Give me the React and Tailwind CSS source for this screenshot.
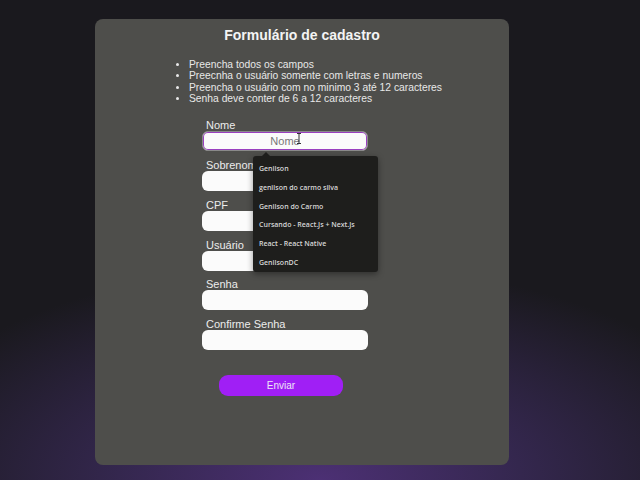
import React from 'react'

const rules = [
  'Preencha todos os campos',
  'Preecnha o usuário somente com letras e numeros',
  'Preencha o usuário com no minimo 3 até 12 caracteres',
  'Senha deve conter de 6 a 12 caracteres',
]

const fields = ['Sobrenome', 'CPF', 'Usuário', 'Senha', 'Confirme Senha']

const suggestions = [
  'Genilson',
  'genilson do carmo silva',
  'Genilson do Carmo',
  'Cursando - React.Js + Next.Js',
  'React - React Native',
  'GenilsonDC',
]

function Field({ label }) {
  return (
    <div className="flex flex-col">
      <label className="ml-[4px] text-[11px] leading-[12px] text-[#ececec]">{label}</label>
      <input
        type="text"
        className="mt-0 h-[20px] w-[166px] rounded-[6px] bg-[#fbfbfb] outline-none"
      />
    </div>
  )
}

export default function App() {
  return (
    <div
      className="relative h-[480px] w-[640px] overflow-hidden bg-[#1a191e] bg-[radial-gradient(ellipse_70%_45%_at_50%_100%,#4c3074_0%,#34274e_45%,#1a191e_100%)] pt-[19px]"
      style={{ fontFamily: '"Liberation Sans", Arial, sans-serif' }}
    >
      <div className="ml-[95px] h-[446px] w-[414px] rounded-[8px] bg-[#4e4e4b] pt-[8px]">
        <h1 className="text-center text-[14px] font-bold leading-[17px] text-[#f4f4f4]">
          Formulário de cadastro
        </h1>

        <ul className="ml-[94px] mt-[15px] list-disc text-[10.3px] leading-[11.3px] text-[#e8e8e8]">
          {rules.map((r) => (
            <li key={r}>{r}</li>
          ))}
        </ul>

        <form className="ml-[107px] mt-[15px] flex flex-col gap-[7.8px]">
          <div className="relative flex flex-col">
            <label className="ml-[4px] text-[11px] leading-[12px] text-[#ececec]">Nome</label>
            <div className="relative h-[20px] w-[166px] rounded-[6px] border border-[#8a8a8a] bg-[#fbfbfb] ring-1 ring-inset ring-[#9a3fc0]">
              <span className="absolute inset-x-0 top-[3px] text-center text-[11px] leading-[12px] text-[#777]">
                Nome
              </span>
              <svg
                className="absolute left-[93px] top-[1px]"
                width="6"
                height="11"
                viewBox="0 0 6 11"
                fill="none"
                stroke="#333"
                strokeWidth="1"
              >
                <path d="M1 0.5h4M3 0.5v10M1 10.5h4" />
              </svg>
            </div>

            <div className="absolute left-[51px] top-[37px] z-10 h-[116px] w-[125px] rounded-[3px] bg-[#1e1e1c] shadow-[0_2px_6px_rgba(0,0,0,0.4)]">
              <div className="absolute -top-[4px] left-[9px] h-0 w-0 border-x-[4px] border-b-[4px] border-x-transparent border-b-[#1e1e1c]" />
              <ul
                className="flex flex-col pt-[8px] pl-[6px] text-[7px] font-semibold leading-[10px] text-[#d6d6d6]"
                style={{ fontFamily: '"Open Sans", "Noto Sans", sans-serif' }}
              >
                {suggestions.map((s) => (
                  <li key={s} className="h-[18.7px]">
                    {s}
                  </li>
                ))}
              </ul>
            </div>
          </div>

          {fields.map((f) => (
            <Field key={f} label={f} />
          ))}

          <button
            type="button"
            className="ml-[17px] mt-[17px] h-[21px] w-[124px] rounded-[9px] bg-[#a01ff5] text-[10px] text-[#efe4f7]"
          >
            Enviar
          </button>
        </form>
      </div>
    </div>
  )
}
